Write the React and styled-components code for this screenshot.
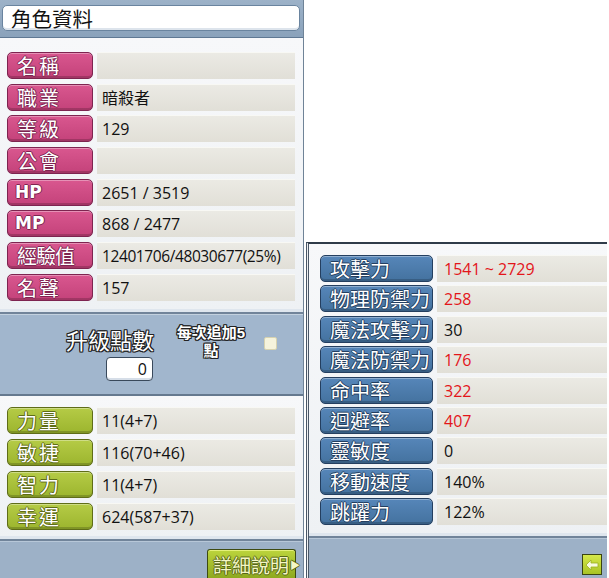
import React from "react";
import styled, { createGlobalStyle } from "styled-components";

const Global = createGlobalStyle`
  html, body { margin: 0; padding: 0; background: #ffffff; }
  body { width: 609px; height: 578px; overflow: hidden; font-family: "Open Sans", "Noto Sans CJK TC", sans-serif; }
`;

const Screen = styled.div`
  display: flex;
  align-items: flex-end;
  width: 609px;
  height: 578px;
`;

const LeftPanel = styled.div`
  width: 303px;
  height: 578px;
  display: flex;
  flex-direction: column;
  border-right: 1px solid #6f8397;
  background: #f4f6f9;
`;

const Header = styled.div`
  height: 38px;
  box-sizing: border-box;
  padding: 5px 3px 6px 2px;
  background: linear-gradient(#9db2c8, #8aa2bb);
  border-bottom: 1px solid #5f7893;
`;

const TitleBox = styled.div`
  height: 100%;
  box-sizing: border-box;
  background: #ffffff;
  border: 1px solid #6a849f;
  border-radius: 5px;
  box-shadow: inset 0 -2px 0 #dde4ec;
  padding-left: 8px;
  font-family: "Noto Sans CJK TC", sans-serif;
  font-size: 20.5px;
  line-height: 24px;
  color: #111;
`;

const Section = styled.div`
  display: flex;
  flex-direction: column;
  gap: ${(p) => p.$gap}px;
  padding: ${(p) => p.$pad};
  background: linear-gradient(#f7f8fa, #eef1f4);
  border-bottom: 2px solid #71849a;
  box-shadow: inset 0 -3px 0 #dfe6ee;
`;

const Row = styled.div`
  display: flex;
  height: 27px;
  gap: 4px;
`;

const Label = styled.div`
  width: ${(p) => p.$w}px;
  flex: none;
  box-sizing: border-box;
  border-radius: 5px;
  border: 1px solid ${(p) => p.$edge};
  background: ${(p) => p.$fill};
  box-shadow: inset 0 1px 0 rgba(255,255,255,0.35), inset 0 -2px 0 rgba(0,0,0,0.18);
  padding-left: ${(p) => p.$pl}px;
  font-family: "Noto Sans CJK TC", sans-serif;
  font-size: 20px;
  line-height: 25px;
  color: #ffffff;
  letter-spacing: ${(p) => p.$ls}px;
  white-space: nowrap;
  overflow: hidden;
  text-shadow: 1px 0 0 ${(p) => p.$edge}, -1px 0 0 ${(p) => p.$edge}, 0 1px 0 ${(p) => p.$edge}, 0 -1px 0 ${(p) => p.$edge};
`;

const LatinLabel = styled(Label)`
  font-family: "DejaVu Sans", sans-serif;
  font-weight: bold;
  font-size: 17px;
  letter-spacing: 0;
`;

const Value = styled.div`
  flex: 1;
  background: linear-gradient(#ebeae4, #e1dfd7);
  border-top: 1px solid #f8f8f4;
  padding-left: ${(p) => p.$pl}px;
  font-family: "Open Sans", "Noto Sans CJK TC", sans-serif;
  font-size: ${(p) => p.$fs}px;
  line-height: 26px;
  color: ${(p) => (p.$red ? "#e3151a" : "#111111")};
  white-space: nowrap;
  letter-spacing: ${(p) => p.$ls || 0}px;
`;

const Points = styled.div`
  height: 82px;
  display: flex;
  align-items: flex-start;
  background: #a1b6cd;
  border-top: 1px solid #c3d1df;
  border-bottom: 2px solid #65798f;
  box-sizing: border-box;
`;

const PointsCol = styled.div`
  display: flex;
  flex-direction: column;
  align-items: flex-end;
  margin-left: 64px;
  padding-top: 11px;
  width: 90px;
`;

const Outlined = styled.div`
  color: #ffffff;
  font-family: ${(p) => (p.$latinFirst ? '"Liberation Sans", "Noto Sans CJK TC", sans-serif' : '"Noto Sans CJK TC", sans-serif')};
  font-size: ${(p) => p.$fs}px;
  font-weight: ${(p) => p.$fw};
  line-height: ${(p) => p.$lh}px;
  height: ${(p) => p.$lh}px;
  text-align: center;
  white-space: nowrap;
  text-shadow: 1px 0 0 #222, -1px 0 0 #222, 0 1px 0 #222, 0 -1px 0 #222, 1px 1px 0 #222, -1px -1px 0 #222, 1px -1px 0 #222, -1px 1px 0 #222;
`;

const NumberBox = styled.div`
  margin-top: 5px;
  margin-right: 1px;
  width: 47px;
  height: 24px;
  box-sizing: border-box;
  background: #ffffff;
  border: 1px solid #39495b;
  border-radius: 4px;
  box-shadow: inset 0 -2px 0 #d6dee8;
  text-align: right;
  padding-right: 5px;
  font-family: "Open Sans", sans-serif;
  font-size: 16px;
  line-height: 22px;
  color: #111;
`;

const AutoAdd = styled.div`
  display: flex;
  flex-direction: column;
  align-items: center;
  width: 78px;
  margin-left: 18px;
  margin-top: 9px;
`;

const Check = styled.div`
  width: 11px;
  height: 11px;
  margin-left: 14px;
  margin-top: 22px;
  background: #f5f3dc;
  border: 1px solid #d6d2b0;
  border-radius: 2px;
`;

const Footer = styled.div`
  flex: 1;
  display: flex;
  justify-content: flex-end;
  align-items: flex-end;
  padding-right: ${(p) => p.$pr}px;
  padding-bottom: ${(p) => p.$pb}px;
  background: #9db1c7;
  border-top: 1px solid #b7c7d8;
`;

const DetailButton = styled.div`
  height: 29px;
  width: 89px;
  box-sizing: border-box;
  border: 1px solid #3d4a12;
  border-bottom: none;
  border-radius: 3px 3px 0 0;
  background: linear-gradient(#bcd43c, #8ea91f);
  box-shadow: inset 0 1px 0 #e4f07a;
  display: flex;
  align-items: center;
  padding-left: 5px;
  font-family: "Noto Sans CJK TC", sans-serif;
  font-size: 19px;
  color: #f4f6c4;
  text-shadow: 1px 0 0 #55661a, -1px 0 0 #55661a, 0 1px 0 #55661a, 0 -1px 0 #55661a;
  white-space: nowrap;
`;

const Arrow = styled.span`
  font-size: 10px;
  margin-left: 1px;
`;

const RightPanel = styled.div`
  width: 301px;
  height: 336px;
  margin-left: 2px;
  display: flex;
  flex-direction: column;
  border-top: 2px solid #2f3b49;
  border-left: 3px double #4a5767;
  box-sizing: border-box;
  background: #eef0f2;
`;

const BackButton = styled.div`
  width: 20px;
  height: 21px;
  box-sizing: border-box;
  border: 1px solid #3a4412;
  background: linear-gradient(#d5e84a, #a9c325);
  display: flex;
  align-items: center;
  justify-content: center;
`;

const pink = { $fill: "linear-gradient(#d9578f, #c4427a)", $edge: "#7e2450" };
const green = { $fill: "linear-gradient(#b5cb46, #9cb52e)", $edge: "#5f6d18" };
const blue = { $fill: "linear-gradient(#5686b9, #44729f)", $edge: "#243f60" };

const infoRows = [
  { k: "名稱", v: "" },
  { k: "職業", v: "暗殺者" },
  { k: "等級", v: "129" },
  { k: "公會", v: "" },
  { k: "HP", v: "2651 / 3519", latin: true },
  { k: "MP", v: "868 / 2477", latin: true },
  { k: "經驗值", v: "12401706/48030677(25%)", small: true },
  { k: "名聲", v: "157" },
];

const statRows = [
  { k: "力量", v: "11(4+7)" },
  { k: "敏捷", v: "116(70+46)" },
  { k: "智力", v: "11(4+7)" },
  { k: "幸運", v: "624(587+37)" },
];

const battleRows = [
  { k: "攻擊力", v: "1541 ~ 2729", red: true },
  { k: "物理防禦力", v: "258", red: true },
  { k: "魔法攻擊力", v: "30" },
  { k: "魔法防禦力", v: "176", red: true },
  { k: "命中率", v: "322", red: true },
  { k: "迴避率", v: "407", red: true },
  { k: "靈敏度", v: "0" },
  { k: "移動速度", v: "140%" },
  { k: "跳躍力", v: "122%" },
];

export default function App() {
  return (
    <>
      <Global />
      <Screen>
        <LeftPanel>
          <Header>
            <TitleBox>角色資料</TitleBox>
          </Header>
          <Section $gap={4.7} $pad="14px 8px 11px 7px">
            {infoRows.map((r) => {
              const L = r.latin ? LatinLabel : Label;
              return (
                <Row key={r.k}>
                  <L {...pink} $w={86} $pl={r.latin ? 7 : 9} $ls={r.k.length > 2 ? -1 : 2}>
                    {r.k}
                  </L>
                  <Value $pl={5} $fs={r.small ? 15.5 : 16} $ls={r.small ? -0.4 : 0}>
                    {r.v}
                  </Value>
                </Row>
              );
            })}
          </Section>
          <Points>
            <PointsCol>
              <Outlined $fs={22} $fw={400} $lh={26}>升級點數</Outlined>
              <NumberBox>0</NumberBox>
            </PointsCol>
            <AutoAdd>
              <Outlined $latinFirst $fs={15} $fw={700} $lh={18}>每次追加5</Outlined>
              <Outlined $latinFirst $fs={15} $fw={700} $lh={18}>點</Outlined>
            </AutoAdd>
            <Check />
          </Points>
          <Section $gap={5} $pad="11px 8px 9px 7px">
            {statRows.map((r) => (
              <Row key={r.k}>
                <Label {...green} $w={86} $pl={9} $ls={2}>{r.k}</Label>
                <Value $pl={5} $fs={16}>{r.v}</Value>
              </Row>
            ))}
          </Section>
          <Footer $pr={7} $pb={0}>
            <DetailButton>詳細說明<Arrow>▶</Arrow></DetailButton>
          </Footer>
        </LeftPanel>
        <RightPanel>
          <Section $gap={3.4} $pad="11px 0 11px 11px">
            {battleRows.map((r) => (
              <Row key={r.k}>
                <Label {...blue} $w={113} $pl={9} $ls={0}>{r.k}</Label>
                <Value $pl={7} $fs={16} $red={r.red}>{r.v}</Value>
              </Row>
            ))}
          </Section>
          <Footer $pr={5} $pb={3}>
            <BackButton>
              <svg width="14" height="12" viewBox="0 0 14 12">
                <path d="M1 6 L6 1 L6 4 L13 4 L13 8 L6 8 L6 11 Z" fill="#f8fbe0" stroke="#9bb020" strokeWidth="0.8" />
              </svg>
            </BackButton>
          </Footer>
        </RightPanel>
      </Screen>
    </>
  );
}
